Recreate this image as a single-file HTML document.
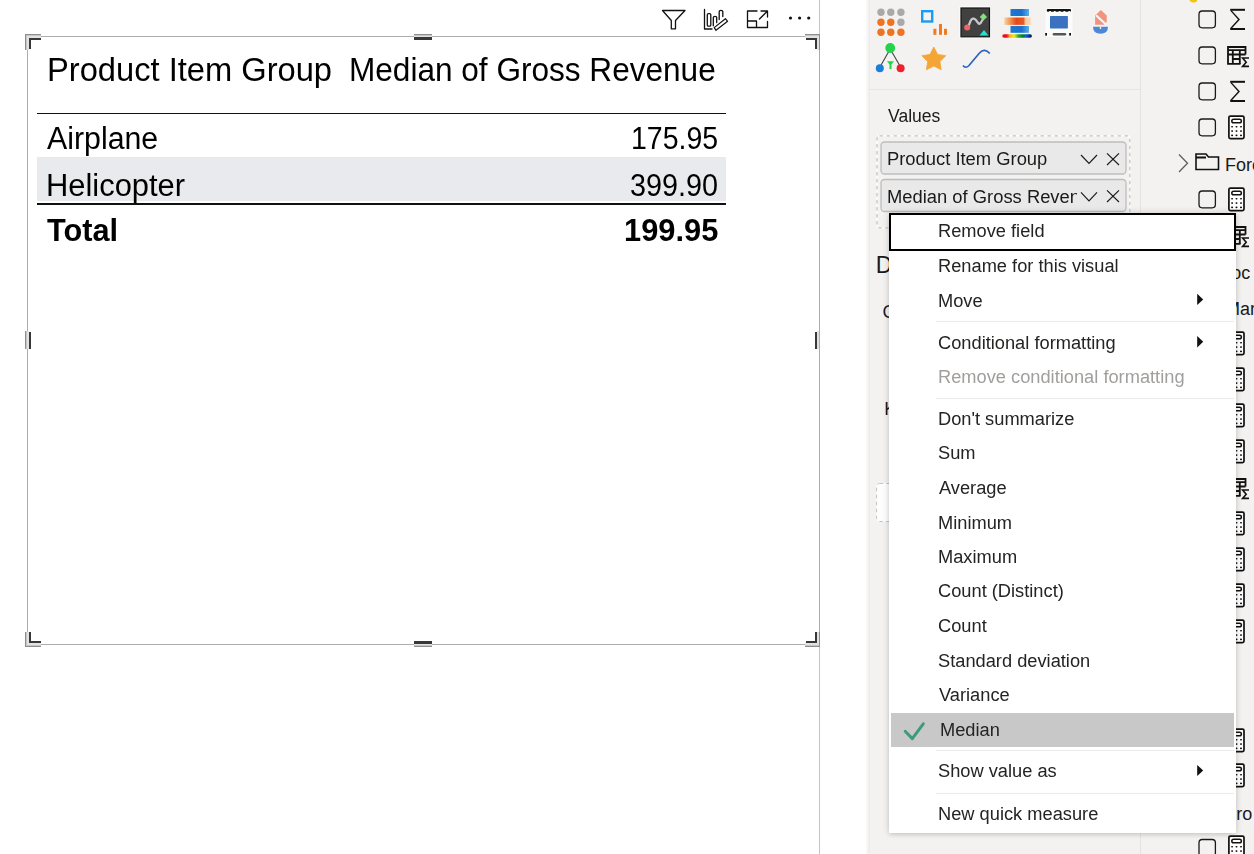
<!DOCTYPE html>
<html><head><meta charset="utf-8">
<style>
*{margin:0;padding:0;box-sizing:border-box}
html,body{width:1254px;height:854px;overflow:hidden;background:#fff;position:relative;font-family:"Liberation Sans",sans-serif;color:#000}
.a{position:absolute}
.t{position:absolute;white-space:nowrap;line-height:1;transform-origin:0 0}
svg{position:absolute;left:0;top:0;overflow:visible}
</style></head><body>

<!-- ===== canvas ===== -->
<div class="a" style="left:819px;top:0;width:1px;height:854px;background:#c4c4c4"></div>
<div class="a" style="left:27px;top:36px;width:793px;height:609px;border:1px solid #acacac"></div>

<!-- handles -->
<div class="a" style="left:25px;top:34px;width:16px;height:1px;background:#8e8e8e"></div>
<div class="a" style="left:25px;top:34px;width:1px;height:16px;background:#8e8e8e"></div>
<div class="a" style="left:26px;top:35px;width:15px;height:1px;background:#c6c6c6"></div>
<div class="a" style="left:26px;top:35px;width:1px;height:15px;background:#c6c6c6"></div>
<div class="a" style="left:27px;top:36px;width:14px;height:2px;background:#e2e2e2"></div>
<div class="a" style="left:27px;top:36px;width:2px;height:14px;background:#e2e2e2"></div>
<div class="a" style="left:29px;top:38px;width:12px;height:2px;background:#383838"></div>
<div class="a" style="left:29px;top:38px;width:2px;height:11px;background:#383838"></div>
<div class="a" style="left:805px;top:34px;width:15px;height:1px;background:#8e8e8e"></div>
<div class="a" style="left:819px;top:34px;width:1px;height:16px;background:#8e8e8e"></div>
<div class="a" style="left:805px;top:35px;width:14px;height:1px;background:#c6c6c6"></div>
<div class="a" style="left:818px;top:35px;width:1px;height:15px;background:#c6c6c6"></div>
<div class="a" style="left:805px;top:36px;width:13px;height:2px;background:#e2e2e2"></div>
<div class="a" style="left:817px;top:36px;width:2px;height:14px;background:#e2e2e2"></div>
<div class="a" style="left:806px;top:38px;width:11px;height:2px;background:#383838"></div>
<div class="a" style="left:815px;top:38px;width:2px;height:11px;background:#383838"></div>
<div class="a" style="left:25px;top:646px;width:16px;height:1px;background:#8e8e8e"></div>
<div class="a" style="left:25px;top:632px;width:1px;height:15px;background:#8e8e8e"></div>
<div class="a" style="left:26px;top:645px;width:15px;height:1px;background:#c6c6c6"></div>
<div class="a" style="left:26px;top:632px;width:1px;height:14px;background:#c6c6c6"></div>
<div class="a" style="left:27px;top:643px;width:14px;height:2px;background:#e2e2e2"></div>
<div class="a" style="left:27px;top:632px;width:2px;height:13px;background:#e2e2e2"></div>
<div class="a" style="left:29px;top:641px;width:12px;height:2px;background:#383838"></div>
<div class="a" style="left:29px;top:632px;width:2px;height:11px;background:#383838"></div>
<div class="a" style="left:805px;top:646px;width:15px;height:1px;background:#8e8e8e"></div>
<div class="a" style="left:819px;top:632px;width:1px;height:15px;background:#8e8e8e"></div>
<div class="a" style="left:805px;top:645px;width:14px;height:1px;background:#c6c6c6"></div>
<div class="a" style="left:818px;top:632px;width:1px;height:14px;background:#c6c6c6"></div>
<div class="a" style="left:805px;top:643px;width:13px;height:2px;background:#e2e2e2"></div>
<div class="a" style="left:817px;top:632px;width:2px;height:13px;background:#e2e2e2"></div>
<div class="a" style="left:806px;top:641px;width:11px;height:2px;background:#383838"></div>
<div class="a" style="left:815px;top:632px;width:2px;height:11px;background:#383838"></div>
<div class="a" style="left:414px;top:34px;width:18px;height:1px;background:#8e8e8e"></div>
<div class="a" style="left:414px;top:35px;width:18px;height:1px;background:#c6c6c6"></div>
<div class="a" style="left:414px;top:36px;width:18px;height:1px;background:#e2e2e2"></div>
<div class="a" style="left:414px;top:37px;width:18px;height:3px;background:#383838"></div>
<div class="a" style="left:414px;top:641px;width:18px;height:3px;background:#383838"></div>
<div class="a" style="left:414px;top:644px;width:18px;height:1px;background:#e2e2e2"></div>
<div class="a" style="left:414px;top:645px;width:18px;height:1px;background:#c6c6c6"></div>
<div class="a" style="left:414px;top:646px;width:18px;height:1px;background:#8e8e8e"></div>
<div class="a" style="left:25px;top:331px;width:1px;height:18px;background:#8e8e8e"></div>
<div class="a" style="left:26px;top:331px;width:1px;height:18px;background:#c6c6c6"></div>
<div class="a" style="left:27px;top:331px;width:2px;height:18px;background:#e2e2e2"></div>
<div class="a" style="left:29px;top:332px;width:2px;height:17px;background:#383838"></div>
<div class="a" style="left:815px;top:332px;width:2px;height:17px;background:#383838"></div>
<div class="a" style="left:817px;top:331px;width:2px;height:18px;background:#e2e2e2"></div>

<!-- table lines -->
<div class="a" style="left:37px;top:113px;width:689px;height:1px;background:#111"></div>
<div class="a" style="left:37px;top:157px;width:689px;height:44px;background:#e9eaed"></div>
<div class="a" style="left:37px;top:203px;width:689px;height:2px;background:#111"></div>

<!-- visual header icons -->
<svg width="1254" height="854" viewBox="0 0 1254 854" style="z-index:2">
 <g fill="none" stroke="#111" stroke-width="1.3" stroke-linejoin="round" stroke-linecap="round">
  <path d="M662.5,10.5 H685 L675.5,20.5 V28.8 H671.3 V20.5 Z"/>
  <path d="M704.5,9.5 V29 H712"/>
  <rect x="707.3" y="13.6" width="3.5" height="12.6" rx="1.2"/>
  <path d="M713.3,25.8 V17.5 Q713.3,16.3 715,16.3 Q716.7,16.3 716.7,17.5 V22.6"/>
  <path d="M719.2,19.5 V11.5 Q719.2,10.3 721,10.3 Q722.8,10.3 722.8,11.5 V16.6"/>
  <path d="M714.2,27.6 L725.4,18.7 L727.6,21.3 L716,30.3 Z" stroke-width="1.2"/>
  <path d="M757,11 H747.5 V27.5 H767.5 V21.5 M767.5,17 V11 H761 M759.5,19 L767,11.5 M747.5,21 H756.5 V27.5"/>
 </g>
 <g fill="#111"><circle cx="790.5" cy="18" r="1.6"/><circle cx="799.6" cy="18" r="1.6"/><circle cx="808.7" cy="18" r="1.6"/></g>
</svg>

<!-- ===== right pane ===== -->
<div class="a" style="left:868px;top:0;width:386px;height:854px;background:#f3f2f1"></div>
<div class="a" style="left:866px;top:0;width:4px;height:854px;background:linear-gradient(90deg,#fbfbfb,#ebeae9)"></div>
<div class="a" style="left:1140px;top:0;width:1px;height:854px;background:#e4e3e2"></div>
<div class="a" style="left:869px;top:89px;width:271px;height:1px;background:#e6e5e4"></div>

<svg width="1254" height="854" viewBox="0 0 1254 854" style="z-index:2">
 <!-- dot grid -->
 <g fill="#a9a9a9"><circle cx="881" cy="12.2" r="3.7"/><circle cx="890.8" cy="12.2" r="3.7"/><circle cx="900.9" cy="12.2" r="3.7"/><circle cx="900.9" cy="22.3" r="3.7"/></g>
 <g fill="#ee7422"><circle cx="881" cy="22.3" r="3.7"/><circle cx="890.8" cy="22.3" r="3.7"/><circle cx="881" cy="32.3" r="3.7"/><circle cx="890.8" cy="32.3" r="3.7"/><circle cx="900.9" cy="32.3" r="3.7"/></g>
 <!-- blue square + bars -->
 <rect x="922.2" y="11.2" width="10" height="10.3" fill="none" stroke="#1b9bf2" stroke-width="2.4"/>
 <g fill="#f07a1c"><rect x="933.4" y="28.8" width="3" height="6"/><rect x="939" y="24" width="3" height="10.8"/><rect x="944" y="28.8" width="3" height="6"/></g>
 <!-- dark square -->
 <rect x="960" y="7" width="30.5" height="30.8" fill="none" stroke="#fdfdfd" stroke-width="1.2"/>
 <rect x="961" y="8" width="28.5" height="28.8" fill="#414141" stroke="#151515" stroke-width="1.2"/>
 <path d="M968.5,26 L970.5,21 Q972.5,17 975.5,19.5 L978.5,23.5 Q979.5,24.5 981,22.5 L983,19" fill="none" stroke="#c8c8c8" stroke-width="2.2"/>
 <circle cx="967.2" cy="27.4" r="3" fill="#f26464"/>
 <path d="M983.4,13.3 L987,16.9 L983.4,20.5 L979.8,16.9 Z" fill="#85e27f"/>
 <path d="M984,30 L988.5,35.6 L979.5,35.6 Z" fill="#22e2d2"/>
 <!-- heatmap -->
 <defs>
  <linearGradient id="hb" x1="0" x2="1"><stop offset="0" stop-color="#1f78d2"/><stop offset="0.6" stop-color="#1a6fcc"/><stop offset="1" stop-color="#5ab0ea"/></linearGradient>
  <linearGradient id="ho" x1="0" x2="1"><stop offset="0" stop-color="#f9d3a8"/><stop offset="0.25" stop-color="#f18a45"/><stop offset="0.45" stop-color="#e24a1c"/><stop offset="0.72" stop-color="#ea5a22"/><stop offset="0.8" stop-color="#f6c89a"/><stop offset="1" stop-color="#f9dcc0"/></linearGradient>
  <filter id="bl" x="-20%" y="-20%" width="140%" height="140%"><feGaussianBlur stdDeviation="0.7"/></filter>
 </defs>
 <g filter="url(#bl)">
 <rect x="1010.5" y="9" width="18.5" height="7" fill="url(#hb)"/>
 <rect x="1004.3" y="17.5" width="26.6" height="7.4" fill="url(#ho)"/>
 <rect x="1010.5" y="26" width="18.5" height="6.8" fill="url(#hb)"/>
 </g>
 <defs><linearGradient id="rb" x1="0" x2="1"><stop offset="0" stop-color="#e8101a"/><stop offset="0.15" stop-color="#e8101a"/><stop offset="0.25" stop-color="#f7b01c"/><stop offset="0.4" stop-color="#f5e81a"/><stop offset="0.55" stop-color="#22a83a"/><stop offset="0.7" stop-color="#0a7a2a"/><stop offset="0.8" stop-color="#1460d0"/><stop offset="1" stop-color="#060c50"/></linearGradient></defs>
 <rect x="1002.3" y="34.3" width="29.6" height="3.4" rx="1.7" fill="url(#rb)"/>
 <!-- film icon -->
 <rect x="1045.5" y="8" width="27" height="29" rx="2" fill="#fbfbfb" filter="url(#bl)"/>
 <rect x="1046.8" y="9" width="24.2" height="2.8" rx="1" fill="#111"/>
 <g fill="#fcfcfc"><circle cx="1050" cy="12.3" r="1.2"/><circle cx="1054.8" cy="12.3" r="1.2"/><circle cx="1059.6" cy="12.3" r="1.2"/><circle cx="1064.4" cy="12.3" r="1.2"/><circle cx="1069.2" cy="12.3" r="1.2"/></g>
 <rect x="1050" y="16" width="17.9" height="12.4" rx="0.6" fill="#3b72c0"/>
 <rect x="1045.2" y="33" width="1.8" height="2.6" fill="#111"/><rect x="1069.2" y="33" width="1.8" height="2.6" fill="#111"/>
 <rect x="1052.7" y="33" width="13.5" height="2.6" rx="1.3" fill="#555"/>
 <!-- pink icon -->
 <path d="M1100.9,10 L1106.7,15.5 V22 L1104.2,24.7 H1095.1 V15.5 Z" fill="#f1937d"/>
 <path d="M1096,15.2 L1105.8,24.2" stroke="#f6f5f4" stroke-width="2.2"/>
 <path d="M1093,26.8 H1108 Q1108,33.8 1100.5,33.8 Q1093,33.8 1093,26.8 Z" fill="#4d88d6"/>
 <path d="M1100.5,26.8 V29" stroke="#e8eef8" stroke-width="1.4"/>
 <!-- tree -->
 <path d="M890.2,49 L880.5,66 M890.2,49 L900,66" stroke="#444" stroke-width="1.1"/>
 <circle cx="890.2" cy="48" r="4.9" fill="#23d44b"/>
 <circle cx="879.8" cy="68.2" r="4" fill="#1a7fd8"/>
 <circle cx="900.6" cy="68.2" r="4" fill="#f0202e"/>
 <path d="M887,61.3 H894 L891.5,64.5 V69 H889.5 V64.5 Z" fill="#23d44b"/>
 <!-- star -->
 <path d="M933.8,47.0 L937.6,54.4 L945.8,55.7 L939.9,61.6 L941.2,69.8 L933.8,66.0 L926.4,69.8 L927.7,61.6 L921.8,55.7 L930.0,54.4 Z" fill="#f5a535" stroke="#f5a535" stroke-width="0.8" stroke-linejoin="round"/>
 <!-- curve -->
 <path d="M963,65.5 Q965.5,69 969,65.5 L979.5,53 Q984.5,47.5 989.8,53.5" fill="none" stroke="#2762c0" stroke-width="1.7"/>

 <!-- pills -->
 <rect x="877" y="135.8" width="252.8" height="92" rx="2.5" fill="none" stroke="#fcfcfc" stroke-width="1.6"/>
 <rect x="877" y="135.8" width="252.8" height="92" rx="2.5" fill="none" stroke="#c4c4c4" stroke-width="1.3" stroke-dasharray="3.5 3.5"/>
 <rect x="881" y="142" width="245" height="32" rx="3.5" fill="#e9e9e9" stroke="#bebdbc" stroke-width="1.3"/>
 <rect x="881" y="179.5" width="245" height="32" rx="3.5" fill="#e9e9e9" stroke="#bebdbc" stroke-width="1.3"/>
 <g fill="none" stroke="#1b1a19" stroke-width="1.15">
  <path d="M1081,155 L1089,163.5 L1097,155"/>
  <path d="M1107,153.3 L1119,165 M1119,153.3 L1107,165"/>
  <path d="M1081,192.3 L1089,200.8 L1097,192.3"/>
  <path d="M1107,190.3 L1119,202 M1119,190.3 L1107,202"/>
 </g>
 <!-- drop zone under menu -->
 <rect x="876.5" y="483.5" width="253" height="38" rx="3" fill="#fdfdfd" stroke="#c4c4c4" stroke-dasharray="3.5 3.5"/>

 <!-- data pane icons -->
 <circle cx="1193.5" cy="-2" r="4.5" fill="#f2c40f"/>
 <g fill="none" stroke="#1b1a19" stroke-width="1.3">
  <rect x="1199" y="11" width="16.4" height="16.8" rx="3.2"/>
  <rect x="1199" y="47" width="16.4" height="16.8" rx="3.2"/>
  <rect x="1199" y="83" width="16.4" height="16.8" rx="3.2"/>
  <rect x="1199" y="119" width="16.4" height="16.8" rx="3.2"/>
  <rect x="1199" y="191" width="16.4" height="16.8" rx="3.2"/>
  <rect x="1199" y="839.5" width="16.4" height="16.8" rx="3.2"/>
 </g>
 <g id="sg" fill="none" stroke="#111">
  <path d="M1230.2,9.8 H1245" stroke-width="2"/>
  <path d="M1230.2,29 H1245" stroke-width="2"/>
  <path d="M1231,10.6 L1239,19.5 L1231,28.3" stroke-width="1.4"/>
 </g>
 <g transform="translate(0,72)"><g fill="none" stroke="#111">
  <path d="M1230.2,9.8 H1245" stroke-width="2"/>
  <path d="M1230.2,29 H1245" stroke-width="2"/>
  <path d="M1231,10.6 L1239,19.5 L1231,28.3" stroke-width="1.4"/>
 </g></g>
 <!-- table sigma -->
 <g id="ts" fill="none" stroke="#111" stroke-width="1.8">
  <path d="M1240.5,63.8 H1228 V47 H1245.5 V54.5"/>
  <path d="M1228,50.2 H1245.5 M1228,54.5 H1245.5 M1233,59 H1240 M1232.8,50 V64 M1239.8,50 V64"/>
  <path d="M1249,58 H1242.6 L1246.2,62.2 L1242.6,66.4 H1249" stroke-width="1.6"/>
 </g>
 <g transform="translate(0,180)"><g fill="none" stroke="#111" stroke-width="1.8">
  <path d="M1240.5,63.8 H1228 V47 H1245.5 V54.5"/>
  <path d="M1228,50.2 H1245.5 M1228,54.5 H1245.5 M1233,59 H1240 M1232.8,50 V64 M1239.8,50 V64"/>
  <path d="M1249,58 H1242.6 L1246.2,62.2 L1242.6,66.4 H1249" stroke-width="1.6"/>
 </g></g>
 <g transform="translate(0,432)"><g fill="none" stroke="#111" stroke-width="1.8">
  <path d="M1240.5,63.8 H1228 V47 H1245.5 V54.5"/>
  <path d="M1228,50.2 H1245.5 M1228,54.5 H1245.5 M1233,59 H1240 M1232.8,50 V64 M1239.8,50 V64"/>
  <path d="M1249,58 H1242.6 L1246.2,62.2 L1242.6,66.4 H1249" stroke-width="1.6"/>
 </g></g>
 <!-- calculators -->
 <g id="calc" fill="none" stroke="#111">
  <rect x="1228.9" y="116.1" width="15.1" height="22.5" rx="1.5" stroke-width="1.7" fill="#fff"/>
  <rect x="1231.8" y="119.2" width="9.6" height="3.6" rx="1.8" stroke-width="1.5"/>
  <g fill="#111" stroke="none">
   <rect x="1231.1" y="125.9" width="2" height="1.7" rx=".8"/><rect x="1235.5" y="125.9" width="2" height="1.7" rx=".8"/><rect x="1240" y="125.9" width="2" height="1.7" rx=".8"/>
   <rect x="1231.1" y="130.2" width="2" height="1.7" rx=".8"/><rect x="1235.5" y="130.2" width="2" height="1.7" rx=".8"/><rect x="1240" y="130.2" width="2" height="1.7" rx=".8"/>
   <rect x="1231.1" y="134.5" width="2" height="1.7" rx=".8"/><rect x="1235.5" y="134.5" width="2" height="1.7" rx=".8"/><rect x="1240" y="134.5" width="2" height="1.7" rx=".8"/>
  </g>
 </g>
 <g transform="translate(0,72)"><g fill="none" stroke="#111">
  <rect x="1228.9" y="116.1" width="15.1" height="22.5" rx="1.5" stroke-width="1.7" fill="#fff"/>
  <rect x="1231.8" y="119.2" width="9.6" height="3.6" rx="1.8" stroke-width="1.5"/>
  <g fill="#111" stroke="none">
   <rect x="1231.1" y="125.9" width="2" height="1.7" rx=".8"/><rect x="1235.5" y="125.9" width="2" height="1.7" rx=".8"/><rect x="1240" y="125.9" width="2" height="1.7" rx=".8"/>
   <rect x="1231.1" y="130.2" width="2" height="1.7" rx=".8"/><rect x="1235.5" y="130.2" width="2" height="1.7" rx=".8"/><rect x="1240" y="130.2" width="2" height="1.7" rx=".8"/>
   <rect x="1231.1" y="134.5" width="2" height="1.7" rx=".8"/><rect x="1235.5" y="134.5" width="2" height="1.7" rx=".8"/><rect x="1240" y="134.5" width="2" height="1.7" rx=".8"/>
  </g>
 </g></g>
 <g transform="translate(0,216)"><g fill="none" stroke="#111">
  <rect x="1228.9" y="116.1" width="15.1" height="22.5" rx="1.5" stroke-width="1.7" fill="#fff"/>
  <rect x="1231.8" y="119.2" width="9.6" height="3.6" rx="1.8" stroke-width="1.5"/>
  <g fill="#111" stroke="none">
   <rect x="1231.1" y="125.9" width="2" height="1.7" rx=".8"/><rect x="1235.5" y="125.9" width="2" height="1.7" rx=".8"/><rect x="1240" y="125.9" width="2" height="1.7" rx=".8"/>
   <rect x="1231.1" y="130.2" width="2" height="1.7" rx=".8"/><rect x="1235.5" y="130.2" width="2" height="1.7" rx=".8"/><rect x="1240" y="130.2" width="2" height="1.7" rx=".8"/>
   <rect x="1231.1" y="134.5" width="2" height="1.7" rx=".8"/><rect x="1235.5" y="134.5" width="2" height="1.7" rx=".8"/><rect x="1240" y="134.5" width="2" height="1.7" rx=".8"/>
  </g>
 </g></g>
 <g transform="translate(0,252)"><g fill="none" stroke="#111">
  <rect x="1228.9" y="116.1" width="15.1" height="22.5" rx="1.5" stroke-width="1.7" fill="#fff"/>
  <rect x="1231.8" y="119.2" width="9.6" height="3.6" rx="1.8" stroke-width="1.5"/>
  <g fill="#111" stroke="none">
   <rect x="1231.1" y="125.9" width="2" height="1.7" rx=".8"/><rect x="1235.5" y="125.9" width="2" height="1.7" rx=".8"/><rect x="1240" y="125.9" width="2" height="1.7" rx=".8"/>
   <rect x="1231.1" y="130.2" width="2" height="1.7" rx=".8"/><rect x="1235.5" y="130.2" width="2" height="1.7" rx=".8"/><rect x="1240" y="130.2" width="2" height="1.7" rx=".8"/>
   <rect x="1231.1" y="134.5" width="2" height="1.7" rx=".8"/><rect x="1235.5" y="134.5" width="2" height="1.7" rx=".8"/><rect x="1240" y="134.5" width="2" height="1.7" rx=".8"/>
  </g>
 </g></g>
 <g transform="translate(0,288)"><g fill="none" stroke="#111">
  <rect x="1228.9" y="116.1" width="15.1" height="22.5" rx="1.5" stroke-width="1.7" fill="#fff"/>
  <rect x="1231.8" y="119.2" width="9.6" height="3.6" rx="1.8" stroke-width="1.5"/>
  <g fill="#111" stroke="none">
   <rect x="1231.1" y="125.9" width="2" height="1.7" rx=".8"/><rect x="1235.5" y="125.9" width="2" height="1.7" rx=".8"/><rect x="1240" y="125.9" width="2" height="1.7" rx=".8"/>
   <rect x="1231.1" y="130.2" width="2" height="1.7" rx=".8"/><rect x="1235.5" y="130.2" width="2" height="1.7" rx=".8"/><rect x="1240" y="130.2" width="2" height="1.7" rx=".8"/>
   <rect x="1231.1" y="134.5" width="2" height="1.7" rx=".8"/><rect x="1235.5" y="134.5" width="2" height="1.7" rx=".8"/><rect x="1240" y="134.5" width="2" height="1.7" rx=".8"/>
  </g>
 </g></g>
 <g transform="translate(0,324)"><g fill="none" stroke="#111">
  <rect x="1228.9" y="116.1" width="15.1" height="22.5" rx="1.5" stroke-width="1.7" fill="#fff"/>
  <rect x="1231.8" y="119.2" width="9.6" height="3.6" rx="1.8" stroke-width="1.5"/>
  <g fill="#111" stroke="none">
   <rect x="1231.1" y="125.9" width="2" height="1.7" rx=".8"/><rect x="1235.5" y="125.9" width="2" height="1.7" rx=".8"/><rect x="1240" y="125.9" width="2" height="1.7" rx=".8"/>
   <rect x="1231.1" y="130.2" width="2" height="1.7" rx=".8"/><rect x="1235.5" y="130.2" width="2" height="1.7" rx=".8"/><rect x="1240" y="130.2" width="2" height="1.7" rx=".8"/>
   <rect x="1231.1" y="134.5" width="2" height="1.7" rx=".8"/><rect x="1235.5" y="134.5" width="2" height="1.7" rx=".8"/><rect x="1240" y="134.5" width="2" height="1.7" rx=".8"/>
  </g>
 </g></g>
 <g transform="translate(0,396)"><g fill="none" stroke="#111">
  <rect x="1228.9" y="116.1" width="15.1" height="22.5" rx="1.5" stroke-width="1.7" fill="#fff"/>
  <rect x="1231.8" y="119.2" width="9.6" height="3.6" rx="1.8" stroke-width="1.5"/>
  <g fill="#111" stroke="none">
   <rect x="1231.1" y="125.9" width="2" height="1.7" rx=".8"/><rect x="1235.5" y="125.9" width="2" height="1.7" rx=".8"/><rect x="1240" y="125.9" width="2" height="1.7" rx=".8"/>
   <rect x="1231.1" y="130.2" width="2" height="1.7" rx=".8"/><rect x="1235.5" y="130.2" width="2" height="1.7" rx=".8"/><rect x="1240" y="130.2" width="2" height="1.7" rx=".8"/>
   <rect x="1231.1" y="134.5" width="2" height="1.7" rx=".8"/><rect x="1235.5" y="134.5" width="2" height="1.7" rx=".8"/><rect x="1240" y="134.5" width="2" height="1.7" rx=".8"/>
  </g>
 </g></g>
 <g transform="translate(0,432)"><g fill="none" stroke="#111">
  <rect x="1228.9" y="116.1" width="15.1" height="22.5" rx="1.5" stroke-width="1.7" fill="#fff"/>
  <rect x="1231.8" y="119.2" width="9.6" height="3.6" rx="1.8" stroke-width="1.5"/>
  <g fill="#111" stroke="none">
   <rect x="1231.1" y="125.9" width="2" height="1.7" rx=".8"/><rect x="1235.5" y="125.9" width="2" height="1.7" rx=".8"/><rect x="1240" y="125.9" width="2" height="1.7" rx=".8"/>
   <rect x="1231.1" y="130.2" width="2" height="1.7" rx=".8"/><rect x="1235.5" y="130.2" width="2" height="1.7" rx=".8"/><rect x="1240" y="130.2" width="2" height="1.7" rx=".8"/>
   <rect x="1231.1" y="134.5" width="2" height="1.7" rx=".8"/><rect x="1235.5" y="134.5" width="2" height="1.7" rx=".8"/><rect x="1240" y="134.5" width="2" height="1.7" rx=".8"/>
  </g>
 </g></g>
 <g transform="translate(0,468)"><g fill="none" stroke="#111">
  <rect x="1228.9" y="116.1" width="15.1" height="22.5" rx="1.5" stroke-width="1.7" fill="#fff"/>
  <rect x="1231.8" y="119.2" width="9.6" height="3.6" rx="1.8" stroke-width="1.5"/>
  <g fill="#111" stroke="none">
   <rect x="1231.1" y="125.9" width="2" height="1.7" rx=".8"/><rect x="1235.5" y="125.9" width="2" height="1.7" rx=".8"/><rect x="1240" y="125.9" width="2" height="1.7" rx=".8"/>
   <rect x="1231.1" y="130.2" width="2" height="1.7" rx=".8"/><rect x="1235.5" y="130.2" width="2" height="1.7" rx=".8"/><rect x="1240" y="130.2" width="2" height="1.7" rx=".8"/>
   <rect x="1231.1" y="134.5" width="2" height="1.7" rx=".8"/><rect x="1235.5" y="134.5" width="2" height="1.7" rx=".8"/><rect x="1240" y="134.5" width="2" height="1.7" rx=".8"/>
  </g>
 </g></g>
 <g transform="translate(0,504)"><g fill="none" stroke="#111">
  <rect x="1228.9" y="116.1" width="15.1" height="22.5" rx="1.5" stroke-width="1.7" fill="#fff"/>
  <rect x="1231.8" y="119.2" width="9.6" height="3.6" rx="1.8" stroke-width="1.5"/>
  <g fill="#111" stroke="none">
   <rect x="1231.1" y="125.9" width="2" height="1.7" rx=".8"/><rect x="1235.5" y="125.9" width="2" height="1.7" rx=".8"/><rect x="1240" y="125.9" width="2" height="1.7" rx=".8"/>
   <rect x="1231.1" y="130.2" width="2" height="1.7" rx=".8"/><rect x="1235.5" y="130.2" width="2" height="1.7" rx=".8"/><rect x="1240" y="130.2" width="2" height="1.7" rx=".8"/>
   <rect x="1231.1" y="134.5" width="2" height="1.7" rx=".8"/><rect x="1235.5" y="134.5" width="2" height="1.7" rx=".8"/><rect x="1240" y="134.5" width="2" height="1.7" rx=".8"/>
  </g>
 </g></g>
 <g transform="translate(0,613)"><g fill="none" stroke="#111">
  <rect x="1228.9" y="116.1" width="15.1" height="22.5" rx="1.5" stroke-width="1.7" fill="#fff"/>
  <rect x="1231.8" y="119.2" width="9.6" height="3.6" rx="1.8" stroke-width="1.5"/>
  <g fill="#111" stroke="none">
   <rect x="1231.1" y="125.9" width="2" height="1.7" rx=".8"/><rect x="1235.5" y="125.9" width="2" height="1.7" rx=".8"/><rect x="1240" y="125.9" width="2" height="1.7" rx=".8"/>
   <rect x="1231.1" y="130.2" width="2" height="1.7" rx=".8"/><rect x="1235.5" y="130.2" width="2" height="1.7" rx=".8"/><rect x="1240" y="130.2" width="2" height="1.7" rx=".8"/>
   <rect x="1231.1" y="134.5" width="2" height="1.7" rx=".8"/><rect x="1235.5" y="134.5" width="2" height="1.7" rx=".8"/><rect x="1240" y="134.5" width="2" height="1.7" rx=".8"/>
  </g>
 </g></g>
 <g transform="translate(0,648)"><g fill="none" stroke="#111">
  <rect x="1228.9" y="116.1" width="15.1" height="22.5" rx="1.5" stroke-width="1.7" fill="#fff"/>
  <rect x="1231.8" y="119.2" width="9.6" height="3.6" rx="1.8" stroke-width="1.5"/>
  <g fill="#111" stroke="none">
   <rect x="1231.1" y="125.9" width="2" height="1.7" rx=".8"/><rect x="1235.5" y="125.9" width="2" height="1.7" rx=".8"/><rect x="1240" y="125.9" width="2" height="1.7" rx=".8"/>
   <rect x="1231.1" y="130.2" width="2" height="1.7" rx=".8"/><rect x="1235.5" y="130.2" width="2" height="1.7" rx=".8"/><rect x="1240" y="130.2" width="2" height="1.7" rx=".8"/>
   <rect x="1231.1" y="134.5" width="2" height="1.7" rx=".8"/><rect x="1235.5" y="134.5" width="2" height="1.7" rx=".8"/><rect x="1240" y="134.5" width="2" height="1.7" rx=".8"/>
  </g>
 </g></g>
 <g transform="translate(0,720)"><g fill="none" stroke="#111">
  <rect x="1228.9" y="116.1" width="15.1" height="22.5" rx="1.5" stroke-width="1.7" fill="#fff"/>
  <rect x="1231.8" y="119.2" width="9.6" height="3.6" rx="1.8" stroke-width="1.5"/>
  <g fill="#111" stroke="none">
   <rect x="1231.1" y="125.9" width="2" height="1.7" rx=".8"/><rect x="1235.5" y="125.9" width="2" height="1.7" rx=".8"/><rect x="1240" y="125.9" width="2" height="1.7" rx=".8"/>
   <rect x="1231.1" y="130.2" width="2" height="1.7" rx=".8"/><rect x="1235.5" y="130.2" width="2" height="1.7" rx=".8"/><rect x="1240" y="130.2" width="2" height="1.7" rx=".8"/>
   <rect x="1231.1" y="134.5" width="2" height="1.7" rx=".8"/><rect x="1235.5" y="134.5" width="2" height="1.7" rx=".8"/><rect x="1240" y="134.5" width="2" height="1.7" rx=".8"/>
  </g>
 </g></g>
 <!-- folder row -->
 <path d="M1179,154.5 L1187.5,163.3 L1179,172" fill="none" stroke="#605e5c" stroke-width="1.3"/>
 <path d="M1196,169.5 V154 H1206 L1208.5,157 H1218.5 V169.5 Z" fill="none" stroke="#111" stroke-width="1.6"/>
 <path d="M1196,157.5 H1206" stroke="#111" stroke-width="2"/>
</svg>

<!-- ===== context menu ===== -->
<div class="a" style="left:889px;top:213px;width:347px;height:620px;background:#fff;box-shadow:0 0 7px rgba(0,0,0,.16),0 2px 4px rgba(0,0,0,.08);z-index:10"></div>
<div class="a" style="left:889px;top:213px;width:347px;height:38px;border:2px solid #000;z-index:11"></div>
<div class="a" style="left:936px;top:321px;width:298px;height:1px;background:#edebe9;z-index:11"></div>
<div class="a" style="left:936px;top:398px;width:298px;height:1px;background:#edebe9;z-index:11"></div>
<div class="a" style="left:891px;top:713px;width:343px;height:34px;background:#c8c8c8;z-index:11"></div>
<div class="a" style="left:936px;top:750px;width:298px;height:1px;background:#edebe9;z-index:11"></div>
<div class="a" style="left:936px;top:793px;width:298px;height:1px;background:#edebe9;z-index:11"></div>
<svg width="1254" height="854" viewBox="0 0 1254 854" style="z-index:12">
 <g fill="#111">
  <path d="M1197.2,293.8 L1203.2,299.4 L1197.2,305 Z"/>
  <path d="M1197.2,336 L1203.2,341.7 L1197.2,347.4 Z"/>
  <path d="M1197.2,765 L1203.2,770.5 L1197.2,776 Z"/>
 </g>
 <path d="M905.2,731.3 L912.3,738.6 L923.3,723.8" fill="none" stroke="#3d9b7c" stroke-width="3" stroke-linecap="round" stroke-linejoin="round"/>
</svg>

<div class="t" style="left:46.62px;top:52px;font-size:34px;color:#000;transform:scaleX(0.9606);z-index:3;">Product Item Group</div>
<div class="t" style="left:348.51px;top:52px;font-size:34px;color:#000;transform:scaleX(0.9284);z-index:3;">Median of Gross Revenue</div>
<div class="t" style="left:46.60px;top:123px;font-size:31px;color:#000;transform:scaleX(0.9777);z-index:3;">Airplane</div>
<div class="t" style="left:45.51px;top:170px;font-size:31px;color:#000;transform:scaleX(0.9963);z-index:3;">Helicopter</div>
<div class="t" style="left:46.50px;top:215px;font-size:31px;color:#000;font-weight:700;transform:scaleX(0.9900);z-index:3;">Total</div>
<div class="t" style="left:630.66px;top:123px;font-size:31px;color:#000;transform:scaleX(0.9185);z-index:3;">175.95</div>
<div class="t" style="left:629.77px;top:170px;font-size:31px;color:#000;transform:scaleX(0.9280);z-index:3;">399.90</div>
<div class="t" style="left:623.51px;top:215px;font-size:31px;color:#000;font-weight:700;transform:scaleX(0.9946);z-index:3;">199.95</div>
<div class="t" style="left:888.20px;top:107px;font-size:18px;color:#1b1a19;transform:scaleX(0.9736);z-index:3;">Values</div>
<div class="t" style="left:886.78px;top:150px;font-size:18px;color:#1b1a19;transform:scaleX(1.0206);z-index:3;">Product Item Group</div>
<div class="a" style="left:886.78px;top:188px;width:190.22px;height:24px;overflow:hidden;z-index:3"><div class="t" style="left:0;top:0;font-size:18px;color:#1b1a19;transform:scaleX(1.0206)">Median of Gross Revenue</div></div>
<div class="t" style="left:875.80px;top:254px;font-size:23px;color:#1b1a19;z-index:3;">Drill through</div>
<div class="t" style="left:882.50px;top:303px;font-size:18px;color:#1b1a19;z-index:3;">Cross-report</div>
<div class="t" style="left:884.30px;top:400px;font-size:18px;color:#1b1a19;z-index:3;">Keep all filters</div>
<div class="t" style="left:1225.00px;top:156px;font-size:18px;color:#1b1a19;z-index:3;">Forecast</div>
<div class="t" style="left:1231.20px;top:264px;font-size:18px;color:#1b1a19;z-index:3;">oc</div>
<div class="t" style="left:1225.00px;top:300px;font-size:18px;color:#1b1a19;z-index:3;">Mar</div>
<div class="t" style="left:1236.20px;top:805px;font-size:18px;color:#1b1a19;z-index:3;">ro</div>
<div class="t" style="left:938.09px;top:222px;font-size:18px;color:#252423;transform:scaleX(1.0141);z-index:12;">Remove field</div>
<div class="t" style="left:938.09px;top:257px;font-size:18px;color:#252423;transform:scaleX(1.0141);z-index:12;">Rename for this visual</div>
<div class="t" style="left:938.09px;top:292px;font-size:18px;color:#252423;transform:scaleX(1.0141);z-index:12;">Move</div>
<div class="t" style="left:938.09px;top:334px;font-size:18px;color:#252423;transform:scaleX(1.0141);z-index:12;">Conditional formatting</div>
<div class="t" style="left:938.09px;top:368px;font-size:18px;color:#a19f9d;transform:scaleX(1.0141);z-index:12;">Remove conditional formatting</div>
<div class="t" style="left:938.09px;top:410px;font-size:18px;color:#252423;transform:scaleX(1.0141);z-index:12;">Don&#39;t summarize</div>
<div class="t" style="left:938.09px;top:444px;font-size:18px;color:#252423;transform:scaleX(1.0141);z-index:12;">Sum</div>
<div class="t" style="left:939.10px;top:479px;font-size:18px;color:#252423;transform:scaleX(1.0141);z-index:12;">Average</div>
<div class="t" style="left:938.09px;top:514px;font-size:18px;color:#252423;transform:scaleX(1.0141);z-index:12;">Minimum</div>
<div class="t" style="left:938.09px;top:548px;font-size:18px;color:#252423;transform:scaleX(1.0141);z-index:12;">Maximum</div>
<div class="t" style="left:938.09px;top:582px;font-size:18px;color:#252423;transform:scaleX(1.0141);z-index:12;">Count (Distinct)</div>
<div class="t" style="left:938.09px;top:617px;font-size:18px;color:#252423;transform:scaleX(1.0141);z-index:12;">Count</div>
<div class="t" style="left:938.09px;top:652px;font-size:18px;color:#252423;transform:scaleX(1.0141);z-index:12;">Standard deviation</div>
<div class="t" style="left:939.10px;top:686px;font-size:18px;color:#252423;transform:scaleX(1.0141);z-index:12;">Variance</div>
<div class="t" style="left:939.59px;top:721px;font-size:18px;color:#252423;transform:scaleX(1.0141);z-index:12;">Median</div>
<div class="t" style="left:938.09px;top:762px;font-size:18px;color:#252423;transform:scaleX(1.0141);z-index:12;">Show value as</div>
<div class="t" style="left:938.09px;top:805px;font-size:18px;color:#252423;transform:scaleX(1.0141);z-index:12;">New quick measure</div>
</body></html>
